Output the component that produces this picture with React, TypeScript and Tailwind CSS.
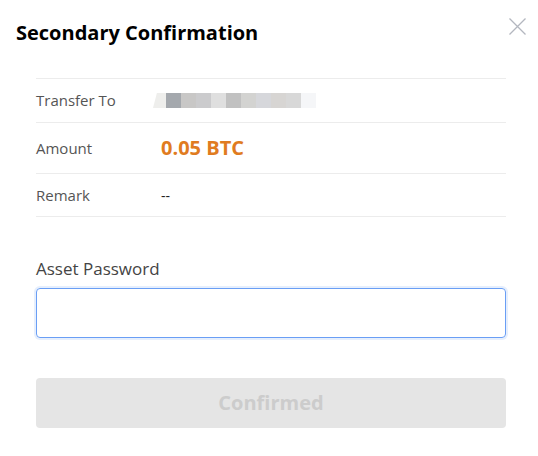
import React from "react";

const blocks = ["#a4a8ad", "#c8c7c6", "#cbcbcd", "#dfdfdf", "#c1c1c1", "#d3d3d1", "#d6d7db", "#d7d5d3", "#d8d8d8", "#f5f6f8"];

export default function App() {
  return (
    <div className="w-[538px] h-[456px] bg-white relative" style={{ fontFamily: '"Open Sans", "Noto Sans", sans-serif' }}>
      <div className="pt-[19px] pl-[16px] h-[78px]">
        <h1 className="text-[20px] leading-[27px] font-bold text-black">Secondary Confirmation</h1>
      </div>
      <button className="absolute left-[509px] top-[18px] w-[17px] h-[17px]">
        <svg width="17" height="17" viewBox="0 0 17 17" fill="none" stroke="#b3b7bf" strokeWidth="1.3">
          <path d="M0.5 0.5 L16.5 16.5 M16.5 0.5 L0.5 16.5" />
        </svg>
      </button>
      <div className="ml-[36px] w-[470px]">
        <div className="border-t border-[#ececec]" />
        <div className="flex items-center h-[44px] border-b border-[#ececec]">
          <div className="w-[117px] text-[15px] text-[#555]">Transfer To</div>
          <div className="flex h-[15px] items-stretch relative">
            <div className="w-[13px] bg-[#eeeeec] [clip-path:polygon(30%_0,100%_0,100%_100%,0_100%)]" />
            {blocks.map((c, i) => (
              <div key={i} className="w-[15px]" style={{ backgroundColor: c }} />
            ))}
          </div>
        </div>
        <div className="flex items-center h-[51px] border-b border-[#ececec]">
          <div className="w-[125px] text-[15px] text-[#555]">Amount</div>
          <div className="text-[20px] font-bold text-[#e07b20]">0.05 BTC</div>
        </div>
        <div className="flex items-center h-[43px] border-b border-[#ececec]">
          <div className="w-[125px] text-[15px] text-[#555]">Remark</div>
          <div className="text-[14px] text-[#222]">--</div>
        </div>
        <div className="mt-[41px] text-[17px] leading-[22px] text-[#444]">Asset Password</div>
        <div className="mt-[8px] h-[50px] rounded-[4px] border border-[#6a9ef5] shadow-[0_0_0_2px_#e6effd]" />
        <button className="mt-[40px] w-full h-[50px] rounded-[4px] bg-[#e5e5e5] text-[20px] font-bold text-[#cccccc]">
          Confirmed
        </button>
      </div>
    </div>
  );
}
